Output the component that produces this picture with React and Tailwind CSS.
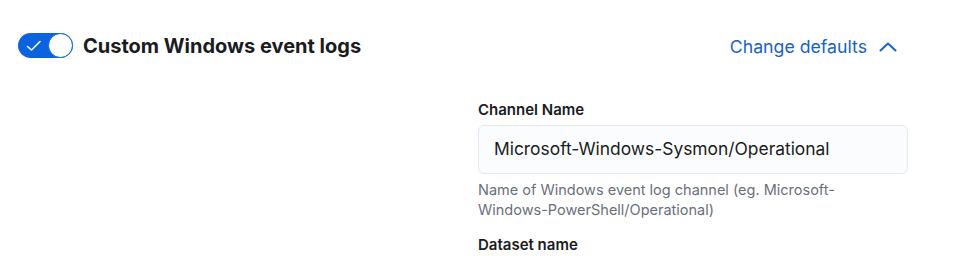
import React from "react";

export default function App() {
  return (
    <div className="w-[953px] h-[256px] bg-white overflow-hidden" style={{ fontFamily: "Inter, 'Noto Sans', sans-serif" }}>
      <div className="flex items-center justify-between pl-[18px] pr-[56px] pt-[30px]">
        <div className="flex items-center gap-[10px]">
          <button className="relative w-[55px] h-[25px] rounded-full bg-[#0b64dd] flex items-center">
            <svg className="absolute left-[8px] top-[7px]" width="16" height="12" viewBox="0 0 16 12" fill="none">
              <path d="M1.5 6.5 L5.5 10 L14 1.5" stroke="white" strokeWidth="1.5" strokeLinecap="round" strokeLinejoin="round" />
            </svg>
            <span className="absolute right-0 top-0 w-[25px] h-[25px] rounded-full bg-white border border-[#0b64dd]" />
          </button>
          <span className="text-[20px] font-bold text-[#1a1c21] leading-[28px] mt-[2px]">Custom Windows event logs</span>
        </div>
        <div className="flex items-center gap-[12px] mt-[4px]">
          <span className="text-[17.7px] text-[#1763c4] leading-[24px]">Change defaults</span>
          <svg width="18" height="10" viewBox="0 0 18 10" fill="none" className="-mt-[1px]">
            <path d="M1.5 8.5 L9 1.5 L16.5 8.5" stroke="#1763c4" strokeWidth="2" strokeLinecap="round" strokeLinejoin="round" />
          </svg>
        </div>
      </div>
      <div className="ml-[478px] w-[430px] mt-[40px]">
        <div className="text-[15px] font-semibold text-[#1a1c21] leading-[20px]">Channel Name</div>
        <div className="mt-[5px] h-[49px] rounded-[6px] border border-[#e3e8f2] bg-[#fbfcfd] flex items-center px-[15px]">
          <span className="text-[17.4px] text-[#1a1c21]">Microsoft-Windows-Sysmon/Operational</span>
        </div>
        <div className="mt-[6px] max-w-[400px] text-[14.5px] text-[#69707d] leading-[20px]">
          Name of Windows event log channel (eg. Microsoft-Windows-PowerShell/Operational)
        </div>
        <div className="mt-[15px] text-[15px] font-semibold text-[#1a1c21] leading-[20px]">Dataset name</div>
      </div>
    </div>
  );
}
